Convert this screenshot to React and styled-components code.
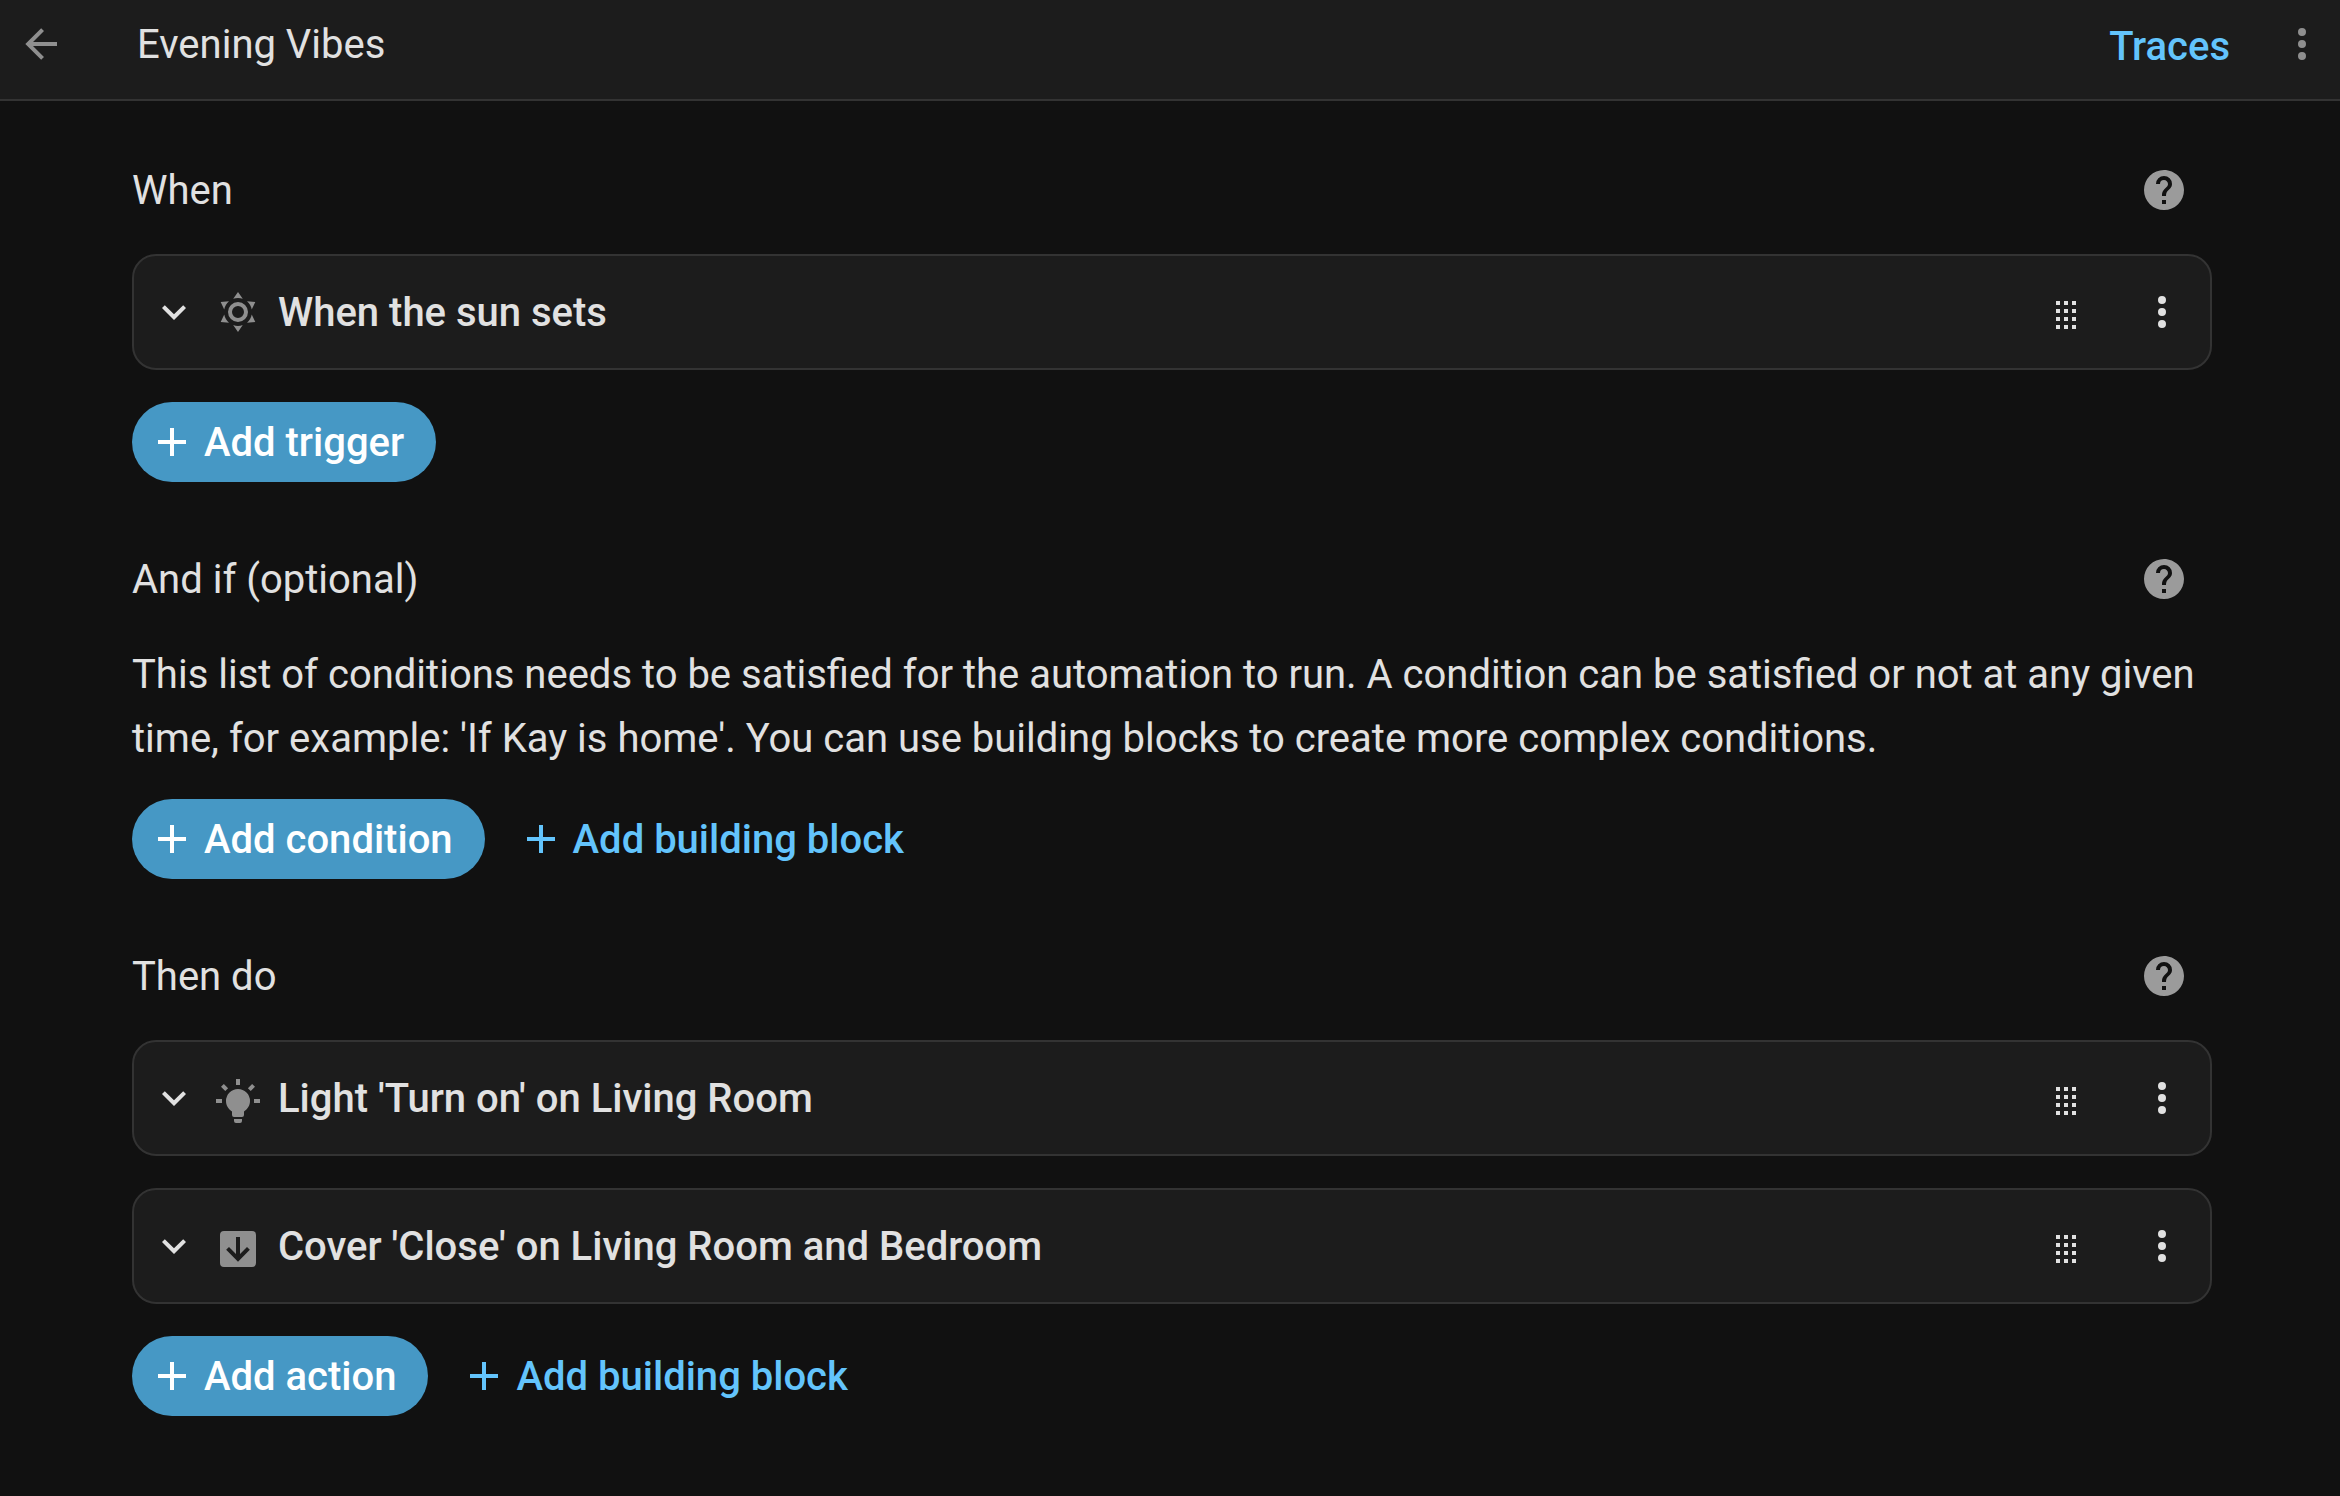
import React from "react";
import styled, { createGlobalStyle } from "styled-components";

const color = {
  page: "#111111",
  surface: "#1c1c1c",
  line: "#333333",
  text: "#e1e1e1",
  muted: "#8f8f8f",
  help: "#9b9b9b",
  accent: "#63c4fc",
  accentFill: "#4698c5",
};

const icons = {
  back: "M20,11V13H8L13.5,18.5L12.08,19.92L4.16,12L12.08,4.08L13.5,5.5L8,11H20Z",
  more: "M12,16A2,2 0 0,1 14,18A2,2 0 0,1 12,20A2,2 0 0,1 10,18A2,2 0 0,1 12,16M12,10A2,2 0 0,1 14,12A2,2 0 0,1 12,14A2,2 0 0,1 10,12A2,2 0 0,1 12,10M12,4A2,2 0 0,1 14,6A2,2 0 0,1 12,8A2,2 0 0,1 10,6A2,2 0 0,1 12,4Z",
  help: "M15.07,11.25L14.17,12.17C13.45,12.89 13,13.5 13,15H11V14.5C11,13.39 11.45,12.39 12.17,11.67L13.41,10.41C13.78,10.05 14,9.55 14,9C14,7.89 13.1,7 12,7A2,2 0 0,0 10,9H8A4,4 0 0,1 12,5A4,4 0 0,1 16,9C16,9.88 15.64,10.67 15.07,11.25M13,19H11V17H13M12,2A10,10 0 0,0 2,12A10,10 0 0,0 12,22A10,10 0 0,0 22,12C22,6.47 17.5,2 12,2Z",
  chevron: "M7.41,8.58L12,13.17L16.59,8.58L18,10L12,16L6,10L7.41,8.58Z",
  drag: "M7,19V17H9V19H7M11,19V17H13V19H11M15,19V17H17V19H15M7,15V13H9V15H7M11,15V13H13V15H11M15,15V13H17V15H15M7,11V9H9V11H7M11,11V9H13V11H11M15,11V9H17V11H15M7,7V5H9V7H7M11,7V5H13V7H11M15,7V5H17V7H15Z",
  plus: "M19,13H13V19H11V13H5V11H11V5H13V11H19V13Z",
  sun: "M12,7A5,5 0 0,1 17,12A5,5 0 0,1 12,17A5,5 0 0,1 7,12A5,5 0 0,1 12,7M12,9A3,3 0 0,0 9,12A3,3 0 0,0 12,15A3,3 0 0,0 15,12A3,3 0 0,0 12,9M12,2L14.39,5.42C13.65,5.15 12.84,5 12,5C11.16,5 10.35,5.15 9.61,5.42L12,2M3.34,7L7.5,6.65C6.9,7.16 6.36,7.78 5.94,8.5C5.5,9.24 5.25,10 5.11,10.79L3.34,7M3.36,17L5.12,13.23C5.26,14 5.53,14.78 5.95,15.5C6.37,16.24 6.91,16.86 7.5,17.37L3.36,17M20.65,7L18.88,10.79C18.74,10 18.47,9.23 18.05,8.5C17.63,7.78 17.1,7.15 16.5,6.64L20.65,7M20.64,17L16.5,17.36C17.09,16.85 17.62,16.22 18.04,15.5C18.46,14.77 18.73,14 18.87,13.21L20.64,17M12,22L9.59,18.56C10.33,18.83 11.14,19 12,19C12.82,19 13.63,18.83 14.37,18.56L12,22Z",
  light: "M12,6A6,6 0 0,1 18,12C18,14.22 16.79,16.16 15,17.2V19A1,1 0 0,1 14,20H10A1,1 0 0,1 9,19V17.2C7.21,16.16 6,14.22 6,12A6,6 0 0,1 12,6M14,21V22A1,1 0 0,1 13,23H11A1,1 0 0,1 10,22V21H14M20,11H23V13H20V11M1,11H4V13H1V11M13,1V4H11V1H13M4.92,3.5L7.05,5.64L5.63,7.05L3.5,4.93L4.92,3.5M16.95,5.63L19.07,3.5L20.5,4.93L18.37,7.05L16.95,5.63Z",
  cover: "M5,21A2,2 0 0,1 3,19V5A2,2 0 0,1 5,3H19A2,2 0 0,1 21,5V19A2,2 0 0,1 19,21H5M11,6V14.5L7.5,11L6.08,12.42L12,18.34L17.92,12.42L16.5,11L13,14.5V6H11Z",
};

const GlobalStyle = createGlobalStyle`
  *, *::before, *::after { box-sizing: border-box; }
  body {
    margin: 0;
    background: ${color.page};
    color: ${color.text};
    font-family: Roboto, "Noto Sans", sans-serif;
    font-size: 40px;
    line-height: 49px;
  }
  h1, h2, h3, p, ul { margin: 0; padding: 0; }
  ul { list-style: none; }
  button { font: inherit; border: 0; padding: 0; background: none; cursor: pointer; }
`;

const Svg = styled.svg`
  display: block;
  width: 48px;
  height: 48px;
  flex: none;
  fill: currentColor;
`;

const Icon = ({ name }) => (
  <Svg viewBox="0 0 24 24" aria-hidden="true">
    <path d={icons[name]} />
  </Svg>
);

const Toolbar = styled.header`
  display: flex;
  align-items: center;
  height: 101px;
  padding: 0 14px 11px 17px;
  background: ${color.surface};
  border-bottom: 2px solid ${color.line};
`;

const IconButton = styled.button`
  color: ${(p) => p.$color || color.text};
`;

const Title = styled.h1`
  flex: 1;
  padding-left: 72px;
  font-size: 40px;
  font-weight: 400;
`;

const TracesLink = styled.a`
  padding: 4px 48px 0;
  color: ${color.accent};
  font-weight: 500;
  text-decoration: none;
`;

const Content = styled.main`
  display: flex;
  flex-direction: column;
  gap: 49px;
  padding: 41px 128px 79px 132px;
`;

const SectionHeader = styled.div`
  display: flex;
  align-items: center;
  justify-content: space-between;
  height: 96px;
  margin-bottom: 16px;
  padding-right: 24px;
`;

const SectionTitle = styled.h2`
  font-size: 40px;
  font-weight: 400;
`;

const Description = styled.p`
  margin-bottom: 28px;
  line-height: 64px;
`;

const CardList = styled.ul`
  display: grid;
  gap: 32px;
  margin-bottom: 32px;
`;

const Card = styled.li`
  display: flex;
  align-items: center;
  height: 116px;
  padding: 0 24px 0 16px;
  background: ${color.surface};
  border: 2px solid ${color.line};
  border-radius: 24px;
`;

const KindIcon = styled.span`
  margin: 0 16px;
  padding-top: ${(p) => (p.$service ? "6px" : "0")};
  color: ${color.muted};
`;

const CardTitle = styled.h3`
  flex: 1;
  font-size: 40px;
  font-weight: 500;
`;

const DragHandle = styled.button`
  margin-right: 48px;
  padding-top: 6px;
  color: ${color.text};
  cursor: grab;
`;

const Actions = styled.div`
  display: flex;
  gap: 16px;
`;

const Button = styled.button`
  display: flex;
  align-items: center;
  gap: 8px;
  height: 80px;
  padding: 0 32px 0 16px;
  border-radius: 40px;
  font-weight: 500;
  color: ${(p) => (p.$filled ? "#ffffff" : color.accent)};
  background: ${(p) => (p.$filled ? color.accentFill : "transparent")};
`;

const AddButton = ({ children, filled }) => (
  <Button type="button" $filled={filled}>
    <Icon name="plus" />
    {children}
  </Button>
);

const Section = ({ title, children }) => (
  <section>
    <SectionHeader>
      <SectionTitle>{title}</SectionTitle>
      <IconButton type="button" aria-label="Help" $color={color.help}>
        <Icon name="help" />
      </IconButton>
    </SectionHeader>
    {children}
  </section>
);

const StepCard = ({ icon, service, title }) => (
  <Card>
    <IconButton type="button" aria-label="Expand">
      <Icon name="chevron" />
    </IconButton>
    <KindIcon $service={service}>
      <Icon name={icon} />
    </KindIcon>
    <CardTitle>{title}</CardTitle>
    <DragHandle type="button" aria-label="Reorder">
      <Icon name="drag" />
    </DragHandle>
    <IconButton type="button" aria-label="More options">
      <Icon name="more" />
    </IconButton>
  </Card>
);

export default function App() {
  return (
    <>
      <GlobalStyle />
      <Toolbar>
        <IconButton type="button" aria-label="Back" $color={color.muted}>
          <Icon name="back" />
        </IconButton>
        <Title>Evening Vibes</Title>
        <TracesLink href="#traces">Traces</TracesLink>
        <IconButton type="button" aria-label="Menu" $color={color.muted}>
          <Icon name="more" />
        </IconButton>
      </Toolbar>
      <Content>
        <Section title="When">
          <CardList>
            <StepCard icon="sun" title="When the sun sets" />
          </CardList>
          <Actions>
            <AddButton filled>Add trigger</AddButton>
          </Actions>
        </Section>
        <Section title="And if (optional)">
          <Description>
            This list of conditions needs to be satisfied for the automation to run. A condition
            can be satisfied or not at any given time, for example: 'If Kay is home'. You can use
            building blocks to create more complex conditions.
          </Description>
          <Actions>
            <AddButton filled>Add condition</AddButton>
            <AddButton>Add building block</AddButton>
          </Actions>
        </Section>
        <Section title="Then do">
          <CardList>
            <StepCard icon="light" service title="Light 'Turn on' on Living Room" />
            <StepCard icon="cover" service title="Cover 'Close' on Living Room and Bedroom" />
          </CardList>
          <Actions>
            <AddButton filled>Add action</AddButton>
            <AddButton>Add building block</AddButton>
          </Actions>
        </Section>
      </Content>
    </>
  );
}
